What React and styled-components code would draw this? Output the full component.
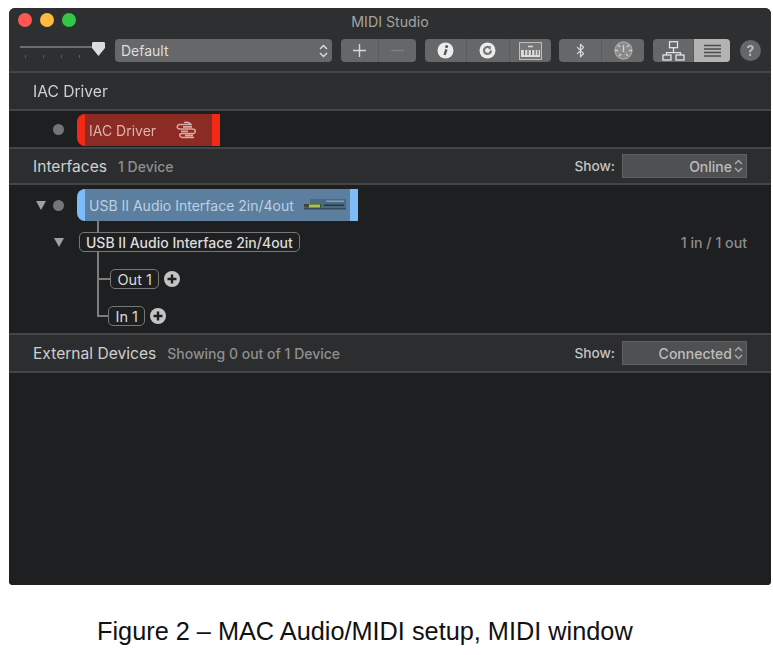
import React from "react";
import styled, { createGlobalStyle } from "styled-components";
import { Bluetooth } from "lucide-react";

const Global = createGlobalStyle`
  html, body { margin: 0; padding: 0; background: #fff; }
`;

const Page = styled.div`
  width: 773px;
  height: 655px;
  overflow: hidden;
  padding-top: 8px;
  box-sizing: border-box;
`;

const Window = styled.div`
  width: 762px;
  height: 577px;
  margin-left: 9px;
  display: flex;
  flex-direction: column;
  background: #1e1f21;
  border-radius: 6px 6px 4px 4px;
  overflow: hidden;
  font-family: Inter, "Liberation Sans", sans-serif;
  filter: blur(0.45px);
`;

const TitleBar = styled.div`
  height: 26px;
  background: #2e2f30;
  display: flex;
  align-items: center;
  position: relative;
  justify-content: center;
  color: #a3a3a3;
  font-size: 14.2px;
`;

const Lights = styled.div`
  position: absolute;
  left: 9px;
  top: 5px;
  display: flex;
  gap: 8px;
`;

const Light = styled.span`
  width: 14px;
  height: 14px;
  border-radius: 50%;
  background: ${(p) => p.$color};
`;

const Toolbar = styled.div`
  height: 37px;
  box-sizing: border-box;
  padding: 5px 0 0 11px;
  background: #2e2f30;
  display: flex;
  align-items: flex-start;
`;

const Slider = styled.div`
  width: 85px;
  height: 23px;
  position: relative;
  margin-right: 10px;
`;

const Track = styled.div`
  height: 2px;
  width: 76px;
  margin-top: 7px;
  background: #6d6d6d;
`;

const Ticks = styled.div`
  display: flex;
  gap: 17px;
  padding: 7px 0 0 5px;
`;

const Tick = styled.span`
  width: 1px;
  height: 3px;
  background: #5c5c5c;
`;

const Thumb = styled.svg`
  position: absolute;
  right: 0;
  top: 3px;
`;

const SelectBox = styled.div`
  width: 217px;
  height: 23px;
  margin-right: 9px;
  box-sizing: border-box;
  padding: 0 3px 0 6px;
  border-radius: 4px;
  background: #666768;
  color: #dedede;
  font-size: 14px;
  display: flex;
  align-items: center;
  justify-content: space-between;
`;

const Group = styled.div`
  width: ${(p) => p.$w}px;
  height: 23px;
  margin-right: ${(p) => p.$mr}px;
  border-radius: 4px;
  overflow: hidden;
  display: flex;
  background: #666768;
`;

const Seg = styled.div`
  flex: ${(p) => p.$flex || 1};
  display: flex;
  align-items: center;
  justify-content: center;
  color: ${(p) => (p.$dim ? "#7d7d7d" : "#d6d6d6")};
  background: ${(p) => (p.$on ? "#b3b3b3" : "transparent")};
  & + & {
    border-left: 1px solid #5a5b5c;
  }
`;

const Help = styled.div`
  width: 21px;
  height: 21px;
  margin-top: 1px;
  border-radius: 50%;
  background: #666768;
  color: #bdbdbd;
  font-size: 14px;
  font-weight: 700;
  display: flex;
  align-items: center;
  justify-content: center;
`;

const Rule = styled.div`
  height: 2px;
  background: #444546;
`;

const SectionHead = styled.div`
  height: ${(p) => p.$h}px;
  box-sizing: border-box;
  padding: 0 24px;
  background: #2c2d2e;
  display: flex;
  align-items: center;
  color: #cfcfcf;
`;

const HeadTitle = styled.span`
  font-size: 15.6px;
`;

const HeadNote = styled.span`
  margin-left: 11px;
  font-size: 14px;
  font-weight: 500;
  color: #8f8f8f;
`;

const ShowLabel = styled.span`
  margin-left: auto;
  margin-right: 7px;
  font-size: 13.7px;
  font-weight: 500;
  color: #c4c4c4;
`;

const ShowSelect = styled.div`
  width: 125px;
  height: 24px;
  box-sizing: border-box;
  padding: 0 2px 0 0;
  border: 1px solid #5f6061;
  background: #4f5051;
  color: #bdbdbd;
  font-size: 14px;
  font-weight: 500;
  display: flex;
  align-items: center;
  justify-content: flex-end;
  gap: 1px;
`;

const IacRow = styled.div`
  height: 36px;
  box-sizing: border-box;
  padding: 3px 0 0 44px;
  display: flex;
  align-items: flex-start;
  gap: 13px;
  background: #1e1f21;
`;

const Dot = styled.span`
  width: 11px;
  height: 11px;
  margin-top: 10px;
  border-radius: 50%;
  background: #757575;
`;

const Block = styled.div`
  width: ${(p) => p.$w}px;
  height: 32px;
  box-sizing: border-box;
  padding: 0 ${(p) => p.$pr}px 0 4px;
  border-radius: 8px 0 0 8px;
  border-left: 8px solid ${(p) => p.$cap};
  border-right: 8px solid ${(p) => p.$cap};
  background: ${(p) => p.$bg};
  color: ${(p) => p.$fg};
  font-size: 14px;
  display: flex;
  align-items: center;
  justify-content: space-between;
`;

const Body = styled.div`
  height: 148px;
  background: #1e1f21;
`;

const DeviceRow = styled.div`
  padding: 4px 0 0 27px;
  display: flex;
  align-items: flex-start;
`;

const Triangle = styled.span`
  width: 0;
  height: 0;
  border-left: 5.5px solid transparent;
  border-right: 5.5px solid transparent;
  border-top: 9px solid #a0a0a0;
`;

const DeviceTriangle = styled(Triangle)`
  margin: 12px 7px 0 0;
`;

const DeviceDot = styled(Dot)`
  margin: 11px 13px 0 0;
`;

const Stem = styled.div`
  width: 2px;
  height: 11px;
  margin-left: 88px;
  background: #7d7d7d;
`;

const EntityRow = styled.div`
  height: 20px;
  padding: 0 24px 0 45px;
  display: flex;
  align-items: center;
`;

const EntityTriangle = styled(Triangle)`
  margin-right: 15px;
`;

const Pill = styled.div`
  height: 20px;
  box-sizing: border-box;
  padding: 0 6px;
  border: 1px solid #777;
  border-radius: 5px;
  display: flex;
  align-items: center;
  color: #dcdcdc;
  font-size: 14px;
  font-weight: 500;
`;

const PortCount = styled.span`
  margin-left: auto;
  font-size: 14.2px;
  font-weight: 500;
  color: #8d8d8d;
`;

const Tree = styled.div`
  margin-left: 88px;
`;

const PortRow = styled.div`
  height: 37px;
  box-sizing: border-box;
  display: flex;
  align-items: flex-end;
  border-left: 2px solid ${(p) => (p.$last ? "transparent" : "#7d7d7d")};
`;

const Elbow = styled.span`
  align-self: flex-start;
  width: 11px;
  height: 28px;
  box-sizing: border-box;
  margin-left: ${(p) => (p.$last ? "-2px" : "0")};
  border-left: ${(p) => (p.$last ? "2px solid #7d7d7d" : "0")};
  border-bottom: 2px solid #7d7d7d;
`;

const PortPill = styled(Pill)`
  padding: 0 6.5px;
  font-size: 14.5px;
  font-weight: 400;
  margin-right: 5px;
`;

const PlusIcon = styled.svg`
  margin-bottom: 2px;
`;

const Empty = styled.div`
  flex: 1;
  background: #1e1f21;
`;

const Caption = styled.div`
  margin: 31px 0 0 97px;
  font-family: "Liberation Sans", Arial, sans-serif;
  font-size: 25.3px;
  line-height: 30px;
  color: #111;
  white-space: nowrap;
`;

const Updown = ({ color = "#d8d8d8" }) => (
  <svg width="11" height="16" viewBox="0 0 11 16" fill="none" stroke={color} strokeWidth="1.5">
    <path d="M2 6l3.5-3.5L9 6M2 10l3.5 3.5L9 10" />
  </svg>
);

const Plus = () => (
  <PlusIcon width="16" height="16" viewBox="0 0 16 16">
    <circle cx="8" cy="8" r="8" fill="#c4c4c4" />
    <path d="M8 3.500v9M3.500 8h9" stroke="#1e1f21" strokeWidth="2.4" />
  </PlusIcon>
);

const InfoIcon = () => (
  <svg width="17" height="17" viewBox="0 0 17 17">
    <circle cx="8.5" cy="8.5" r="8" fill="#ececec" />
    <circle cx="9.6" cy="4.6" r="1.5" fill="#555" />
    <path d="M9.4 7.4L7.6 13" stroke="#555" strokeWidth="2.4" />
  </svg>
);

const RingIcon = () => (
  <svg width="17" height="17" viewBox="0 0 17 17">
    <circle cx="8.5" cy="8.5" r="8" fill="#ececec" />
    <path d="M12 8.500a3.500 3.500 0 1 1-2-3.200" fill="none" stroke="#777" strokeWidth="2.2" />
    <path d="M8 5l4-1-.6 4z" fill="#777" />
  </svg>
);

const KeysIcon = () => (
  <svg width="23" height="18" viewBox="0 0 23 18">
    <rect x=".5" y=".5" width="22" height="17" fill="#777" stroke="#bdbdbd" />
    <path d="M9 4.500h5" stroke="#d8d8d8" strokeWidth="1.400" />
    <rect x="2" y="8" width="19" height="7" fill="#dcdcdc" />
    <path d="M5.500 8v5M9 8v5M12.500 8v5M16 8v5M19 8v5" stroke="#666" strokeWidth="1.200" />
  </svg>
);

const GlobeIcon = () => (
  <svg width="19" height="19" viewBox="0 0 19 19" fill="none" stroke="#a6a6a6" strokeWidth="1.300">
    <circle cx="9.500" cy="9.500" r="8.500" fill="#8a8a8a" />
    <path d="M9.500 4v7M1 9.500h3M15 9.500h3M4 4l2 2M15 4l-2 2M5 15l2-2M14 15l-2-2" stroke="#cfcfcf" />
  </svg>
);

const NetworkIcon = () => (
  <svg width="23" height="20" viewBox="0 0 23 20" fill="none" stroke="#e2e2e2" strokeWidth="1.300">
    <rect x="7.500" y=".7" width="8" height="6" />
    <path d="M11.500 6.700v5M4.500 14v-2.300h14V14" />
    <rect x="1" y="14" width="8" height="5" />
    <rect x="14" y="14" width="8" height="5" />
  </svg>
);

const ListIcon = () => (
  <svg width="17" height="14" viewBox="0 0 17 14" stroke="#4c4c4c" strokeWidth="1.400">
    <path d="M0 1.500h17M0 5h17M0 8.500h17M0 12h17" />
  </svg>
);

const CableIcon = () => (
  <svg width="22" height="18" viewBox="0 0 22 18" fill="none" stroke="#d9a9a2" strokeWidth="1.500">
    <path d="M8 1.500c3-1 6 .5 7 2H4C1 3.500 0 7 3 8h13c4 0 4 3 2 4.500H6c-3 0-3 3 0 4h12" />
    <path d="M7 5.800h9M5 10.300h7M9 14.500h8" strokeWidth="1.800" />
  </svg>
);

const RackIcon = () => (
  <svg width="42" height="16" viewBox="0 0 42 16">
    <rect x="6" y="2" width="36" height="10" fill="#4b6a80" />
    <rect x="0" y="7" width="17" height="3.500" fill="#3d4a3a" />
    <rect x="5" y="7.500" width="11" height="3" fill="#a8c24a" />
    <rect x="22" y="3.500" width="18" height="1.500" fill="#7f9db3" />
    <rect x="20" y="7.500" width="20" height="1.500" fill="#25384a" />
    <rect x="0" y="11" width="42" height="1.500" fill="#364b5d" />
  </svg>
);

const App = () => {
  return (
    <Page>
      <Global />
      <Window>
        <TitleBar>
          <Lights>
            <Light $color="#fc5753" />
            <Light $color="#fdbc40" />
            <Light $color="#33c748" />
          </Lights>
          MIDI Studio
        </TitleBar>
        <Toolbar>
          <Slider>
            <Track />
            <Ticks>
              <Tick />
              <Tick />
              <Tick />
              <Tick />
            </Ticks>
            <Thumb width="13" height="14" viewBox="0 0 13 14">
              <path d="M1.500 0h10c1 0 1.500.5 1.500 1.500V6L6.500 14 0 6V1.500C0 .5.500 0 1.500 0z" fill="#dcdcdc" />
            </Thumb>
          </Slider>
          <SelectBox>
            Default
            <Updown />
          </SelectBox>
          <Group $w={75} $mr={9}>
            <Seg>
              <svg width="13" height="13" viewBox="0 0 13 13" stroke="#d8d8d8" strokeWidth="1.400">
                <path d="M6.500 0v13M0 6.500h13" />
              </svg>
            </Seg>
            <Seg $dim>
              <svg width="13" height="13" viewBox="0 0 13 13" stroke="#7d7d7d" strokeWidth="1.400">
                <path d="M0 6.500h13" />
              </svg>
            </Seg>
          </Group>
          <Group $w={126} $mr={8}>
            <Seg>
              <InfoIcon />
            </Seg>
            <Seg>
              <RingIcon />
            </Seg>
            <Seg>
              <KeysIcon />
            </Seg>
          </Group>
          <Group $w={85} $mr={9}>
            <Seg>
              <Bluetooth size={15} strokeWidth={2} color="#d8d8d8" />
            </Seg>
            <Seg>
              <GlobeIcon />
            </Seg>
          </Group>
          <Group $w={77} $mr={10}>
            <Seg $flex={41}>
              <NetworkIcon />
            </Seg>
            <Seg $flex={36} $on>
              <ListIcon />
            </Seg>
          </Group>
          <Help>?</Help>
        </Toolbar>
        <Rule />
        <SectionHead $h={36}>
          <HeadTitle>IAC Driver</HeadTitle>
        </SectionHead>
        <Rule />
        <IacRow>
          <Dot />
          <Block $w={143} $pr={14} $cap="#f02a14" $bg="#8b2b23" $fg="#dcb5ae">
            IAC Driver
            <CableIcon />
          </Block>
        </IacRow>
        <Rule />
        <SectionHead $h={34}>
          <HeadTitle>Interfaces</HeadTitle>
          <HeadNote>1 Device</HeadNote>
          <ShowLabel>Show:</ShowLabel>
          <ShowSelect>
            Online
            <Updown color="#a8a8a8" />
          </ShowSelect>
        </SectionHead>
        <Rule />
        <Body>
          <DeviceRow>
            <DeviceTriangle />
            <DeviceDot />
            <Block $w={281} $pr={4} $cap="#7cbdf9" $bg="#5c7f9f" $fg="#bcd0e0">
              USB II Audio Interface 2in/4out
              <RackIcon />
            </Block>
          </DeviceRow>
          <Stem />
          <EntityRow>
            <EntityTriangle />
            <Pill>USB II Audio Interface 2in/4out</Pill>
            <PortCount>1 in / 1 out</PortCount>
          </EntityRow>
          <Tree>
            <PortRow>
              <Elbow />
              <PortPill>Out 1</PortPill>
              <Plus />
            </PortRow>
            <PortRow $last>
              <Elbow $last />
              <PortPill>In 1</PortPill>
              <Plus />
            </PortRow>
          </Tree>
        </Body>
        <Rule />
        <SectionHead $h={36}>
          <HeadTitle>External Devices</HeadTitle>
          <HeadNote>Showing 0 out of 1 Device</HeadNote>
          <ShowLabel>Show:</ShowLabel>
          <ShowSelect>
            Connected
            <Updown color="#a8a8a8" />
          </ShowSelect>
        </SectionHead>
        <Rule />
        <Empty />
      </Window>
      <Caption>Figure 2 – MAC Audio/MIDI setup, MIDI window</Caption>
    </Page>
  );
};

export default App;
